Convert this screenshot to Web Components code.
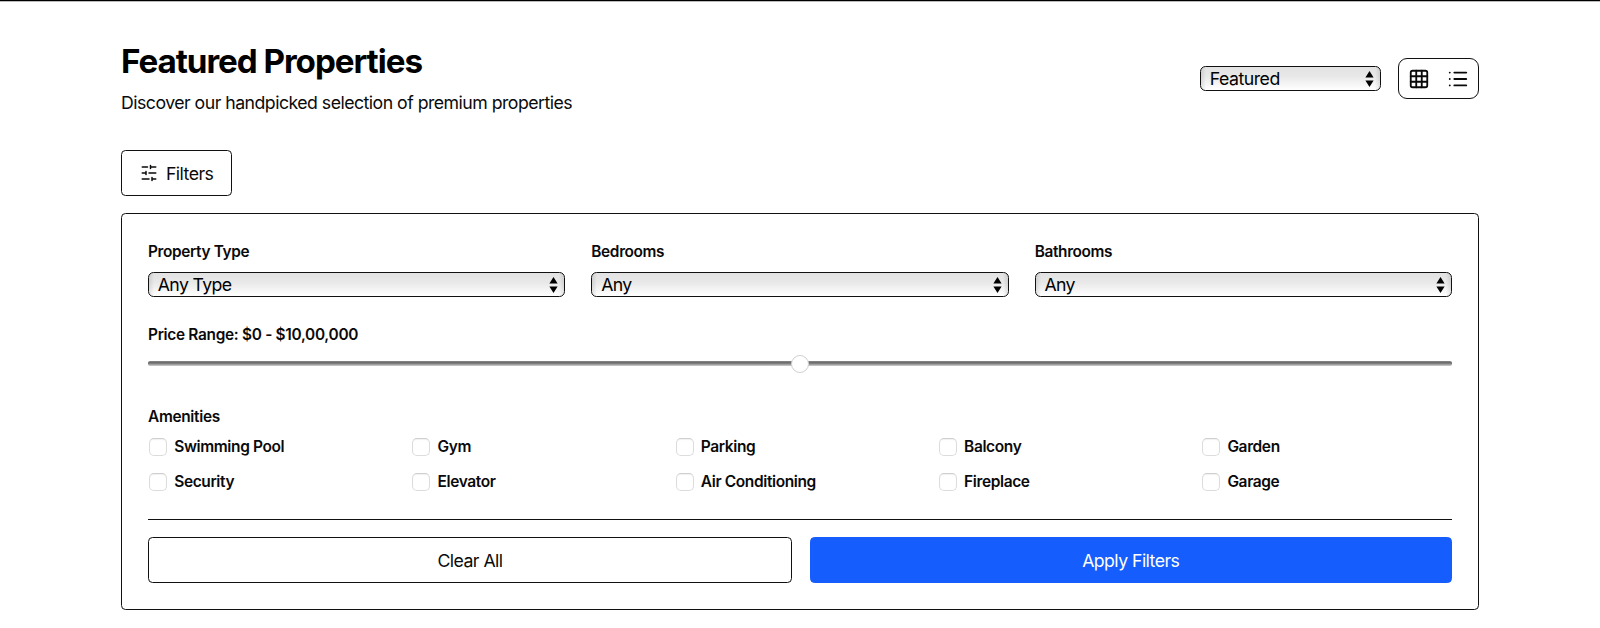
<!DOCTYPE html>
<html lang="en"><head><meta charset="utf-8"><title>Featured Properties</title>
<style>
html,body{margin:0;height:100%;background:#fff;overflow:hidden}
body{font-family:Inter,"Liberation Sans",sans-serif;color:#0a0a0a}
</style></head><body>
<property-listing></property-listing>
<script>
const define=(name,html)=>customElements.define(name,class extends HTMLElement{
  constructor(){super();const t=document.createElement('template');t.innerHTML=html;
    this.attachShadow({mode:'open'}).append(t.content.cloneNode(true));}
});

define('select-box',`<style>
:host{display:flex;box-sizing:border-box;height:25px;align-items:center;justify-content:space-between;
border:1.4px solid #111;border-radius:5.5px;padding:0 6px 0 8.8px;font-size:17.7px;line-height:22px;letter-spacing:var(--ls,-.65px);color:#000;
background:linear-gradient(90deg,rgba(0,0,0,.1),transparent 5px,transparent calc(100% - 5px),rgba(0,0,0,.1)),linear-gradient(#e2e2e2,#e8e8e8 40%,#fff)}
svg{display:block;width:9px;height:16px}
</style><span><slot></slot></span><svg viewBox="0 0 9 16"><path d="M4.5 0 8.6 6.4H.4zM4.5 16 8.6 9.4H.4z" fill="#000"/></svg>`);

define('form-field',`<style>
:host{display:block;min-width:0}
.label{font-size:15.4px;font-weight:600;line-height:24px;height:22px;margin-bottom:10px;letter-spacing:-.35px}
</style><div class="label"><slot name="label"></slot></div><slot></slot>`);

define('range-slider',`<style>
:host{display:flex;height:18px;align-items:center;position:relative}
.track{flex:1;height:5px;border-radius:2px;background:linear-gradient(#8a8a8a,#696969 35%,#8d8d8d 60%,#d2d2d2)}
.thumb{position:absolute;left:calc(50% - 9px);top:0;box-sizing:border-box;width:18px;height:18px;border-radius:50%;background:#fff;border:1px solid #d0d0d0}
</style><div class="track"></div><div class="thumb"></div>`);

define('check-item',`<style>
:host{display:flex;align-items:center;height:18px;gap:7.2px;font-size:15.5px;font-weight:600;line-height:18px;letter-spacing:-.38px;white-space:nowrap}
i{box-sizing:border-box;width:18px;height:18px;margin-left:1px;border-radius:5px;border:1px solid #dcdcdc;border-top-color:#cfcfcf;box-shadow:inset 0 1px 1px rgba(0,0,0,.06);background:#fff}
span{padding-top:1px}
</style><i></i><span><slot></slot></span>`);

define('action-button',`<style>
:host{display:flex;box-sizing:border-box;height:46px;align-items:center;justify-content:center;gap:8.3px;
border:1.4px solid #111;border-radius:4.5px;font-size:17.7px;line-height:24px;background:#fff;letter-spacing:-.55px}
:host([primary]){background:#155dfc;border-color:#155dfc;color:#fff}
span{padding-top:1px}
</style><slot name="icon"></slot><span><slot></slot></span>`);

define('view-toggle',`<style>
:host{display:flex;box-sizing:border-box;width:81px;height:41px;border:1.4px solid #111;border-radius:9px;align-items:center;justify-content:space-between;padding:0 9px 0 9.2px}
svg{display:block;width:22px;height:22px;fill:none;stroke:#0a0a0a;stroke-width:2;stroke-linecap:round;stroke-linejoin:round}
</style>
<svg viewBox="0 0 24 24"><rect x="3" y="3" width="18" height="18" rx="2"/><path d="M3 9h18M3 15h18M9 3v18M15 3v18"/></svg>
<svg viewBox="0 0 24 24"><path d="M3 5h.01M3 12h.01M3 19h.01M8 5h13M8 12h13M8 19h13"/></svg>`);

define('property-listing',`<style>
:host{display:block;box-sizing:border-box;height:628px;border-top:1px solid #000;box-shadow:inset 0 1px #bbb;padding:42px 121px 0}
header{display:flex;justify-content:space-between;height:107px}
h1{margin:0;font-size:33.2px;line-height:37px;font-weight:700;letter-spacing:-1.05px;color:#000}
p{margin:9px 0 0;font-size:17.7px;line-height:27px;letter-spacing:-.52px}
.tools{display:flex;gap:17px;align-items:center;height:41px;margin-top:15px}
.tools select-box{width:181px;--ls:-.5px}
.filter{width:111px;margin-bottom:17px}
.filter svg{display:block;width:18px;height:18px}
.panel{box-sizing:border-box;height:397px;border:1.4px solid #111;border-radius:4.5px;padding:26px;display:flex;flex-direction:column}
.fields{display:grid;grid-template-columns:repeat(3,1fr);gap:26px;margin-bottom:27px}
.cap{font-size:15.4px;font-weight:600;line-height:22px;letter-spacing:-.3px}
range-slider{margin:8.5px 0 33.5px}
.grid{display:grid;grid-template-columns:repeat(5,1fr);gap:17px 12.5px;margin-top:10px}
.actions{display:grid;grid-template-columns:644px 1fr;gap:17.5px;border-top:1.4px solid #111;margin-top:28px;padding-top:17.5px}
</style>
<header><div><h1>Featured Properties</h1><p>Discover our handpicked selection of premium properties</p></div>
<div class="tools"><select-box>Featured</select-box><view-toggle></view-toggle></div></header>
<action-button class="filter"><svg slot="icon" viewBox="0 0 24 24" fill="none" stroke="#0a0a0a" stroke-width="2" stroke-linecap="round" stroke-linejoin="round"><path d="M21 4h-7M10 4H3M21 12h-9M8 12H3M21 20h-5M12 20H3M14 2v4M8 10v4M16 18v4"/></svg>Filters</action-button>
<section class="panel">
<div class="fields">
<form-field><span slot="label">Property Type</span><select-box>Any Type</select-box></form-field>
<form-field><span slot="label">Bedrooms</span><select-box>Any</select-box></form-field>
<form-field><span slot="label">Bathrooms</span><select-box>Any</select-box></form-field></div>
<div class="cap">Price Range: $0 - $10,00,000</div>
<range-slider></range-slider>
<div class="cap">Amenities</div>
<div class="grid">
<check-item>Swimming Pool</check-item><check-item>Gym</check-item><check-item>Parking</check-item><check-item>Balcony</check-item><check-item>Garden</check-item>
<check-item>Security</check-item><check-item>Elevator</check-item><check-item>Air Conditioning</check-item><check-item>Fireplace</check-item><check-item>Garage</check-item></div>
<div class="actions"><action-button>Clear All</action-button><action-button primary>Apply Filters</action-button></div>
</section>`);
</script></body></html>
